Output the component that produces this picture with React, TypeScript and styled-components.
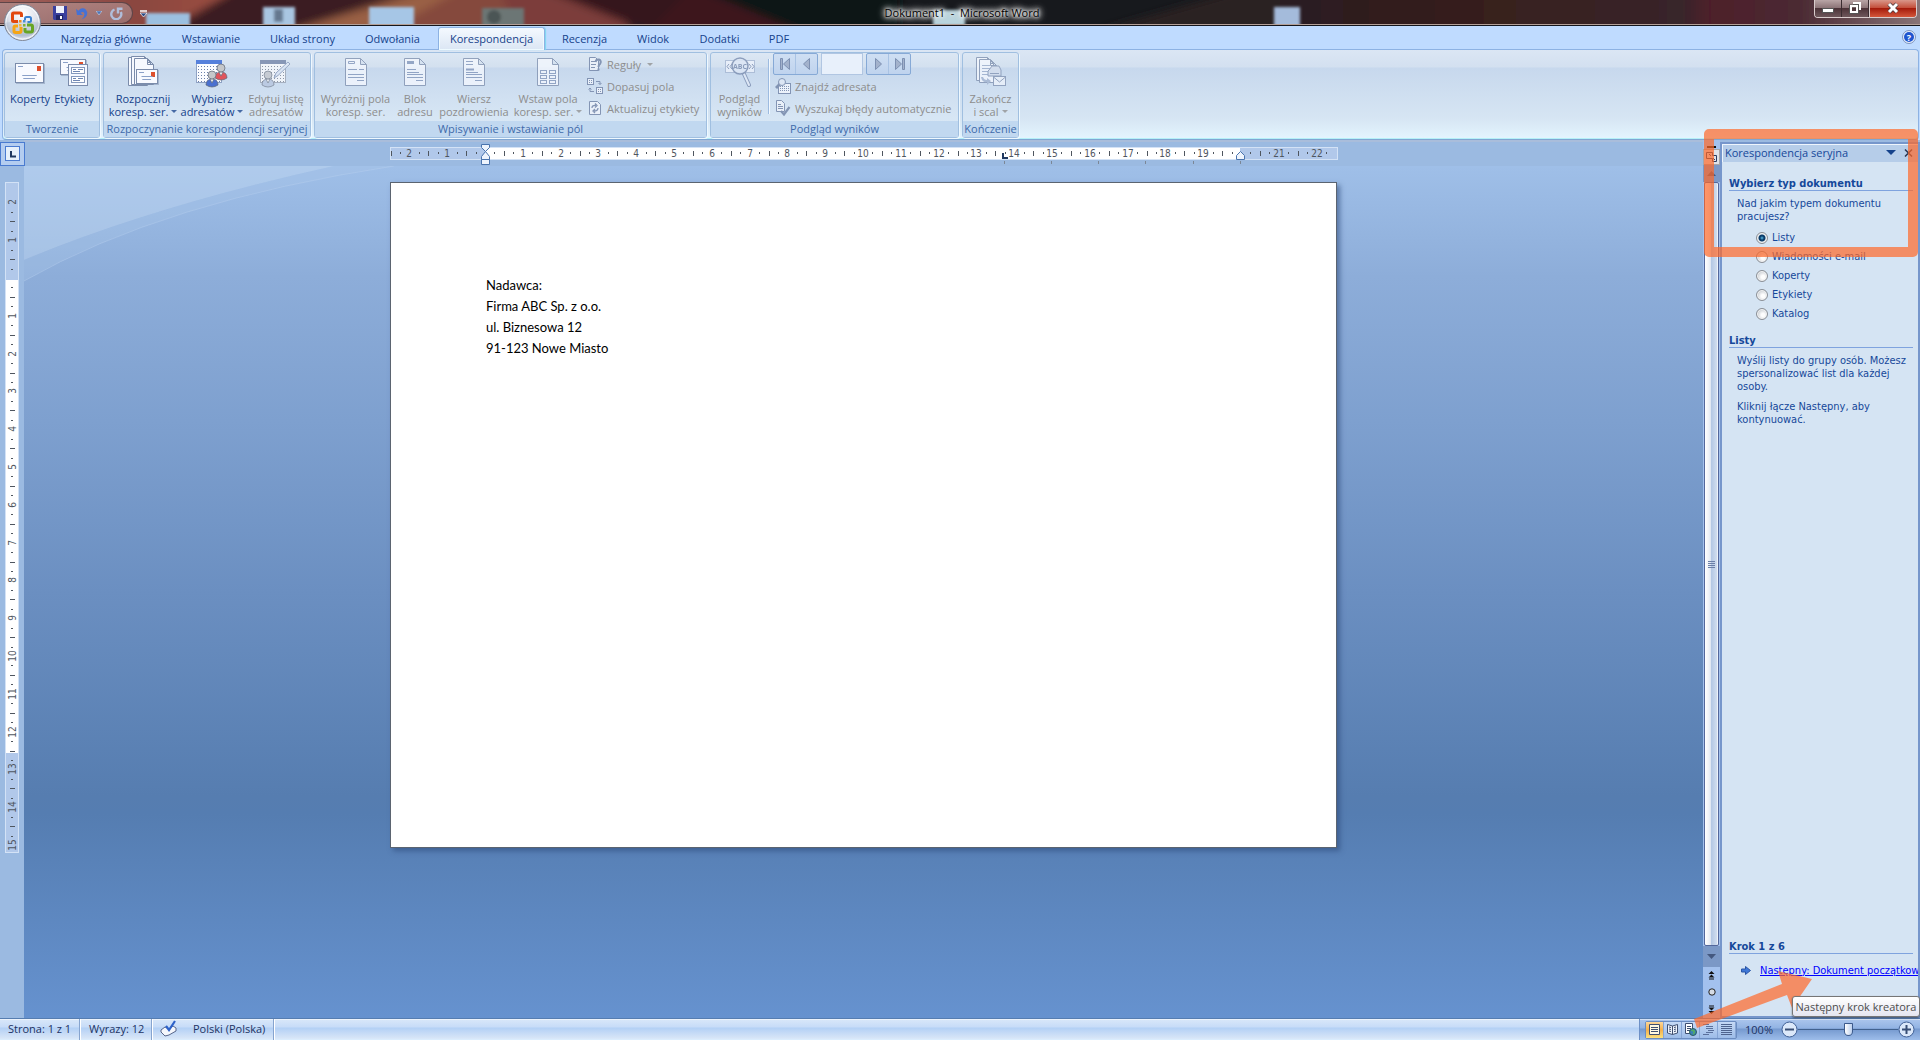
import React from "react";
import styled, { createGlobalStyle, css } from "styled-components";

const ui = `"Open Sans", "Noto Sans", sans-serif`;
const paneFont = `"DejaVu Sans Condensed", "DejaVu Sans", sans-serif`;
const navy = "#15428b";

const GlobalStyle = createGlobalStyle`
  * { box-sizing: border-box; }
  body { margin: 0; background: #5d86bd; }
  button, input { font: inherit; color: inherit; margin: 0; }
  h2, h3, p { margin: 0; }
  svg { flex-shrink: 0; }
`;

const Window = styled.div`
  position: relative;
  display: flex;
  flex-direction: column;
  min-height: 100vh;
  overflow: hidden;
  font: 11px/13px ${ui};
  color: ${navy};
`;

/* ---------- title bar ---------- */

const TitleBar = styled.header`
  position: relative;
  display: flex;
  align-items: flex-start;
  justify-content: space-between;
  height: 26px;
  border-bottom: 1px solid #15161c;
  box-shadow: inset 0 -1px #b39f97;
  background: #24191d;
`;

const Wallpaper = styled.svg`
  position: absolute;
  inset: 0;
  width: 100%;
  height: 24px;
`;

const QuickAccess = styled.div`
  position: relative;
  display: flex;
  align-items: center;
  width: 133px;
  height: 22px;
  margin-top: 2px;
  padding-left: 53px;
  gap: 8px;
  border: 1px solid #5f4548;
  border-left: 0;
  border-radius: 0 12px 12px 0;
  background: linear-gradient(#b99a9a99, #a5888a99);
`;

const ToolButton = styled.button`
  display: flex;
  padding: 0;
  border: 0;
  background: none;
`;

const Customize = styled(ToolButton)`
  position: absolute;
  left: 140px;
  top: 7px;
`;

const WindowTitle = styled.div`
  position: absolute;
  inset: 5px 0 auto 4px;
  text-align: center;
  line-height: 16px;
  color: #000;
  text-shadow: 0 0 3px #fff, 0 0 5px #fff, 0 0 6px #fff, 0 0 8px #eee, 0 0 10px #ccc;
`;

const WindowButtons = styled.div`
  position: relative;
  display: flex;
  height: 18px;
  margin-right: 3px;
  border: 1px solid #d9cccc;
  border-top: 0;
  border-radius: 0 0 4px 4px;
  overflow: hidden;
`;

const WindowButton = styled.button<{ $close?: boolean }>`
  display: flex;
  align-items: center;
  justify-content: center;
  width: ${(p) => (p.$close ? 47 : 27)}px;
  padding: 0 0 2px;
  border: 0;
  border-left: ${(p) => (p.$close ? 1 : 0)}px solid #d9cccc;
  border-right: ${(p) => (p.$close ? 0 : 1)}px solid #3a2c30;
  background: ${(p) =>
    p.$close
      ? "linear-gradient(#d9978a, #c4503c 45%, #a51c0c 50%, #d4563a)"
      : "linear-gradient(#b9a5a6, #8d7578 45%, #4c3338 50%, #6e575b)"};
`;

const OfficeButton = styled.button`
  position: absolute;
  z-index: 2;
  left: 3px;
  top: 3px;
  padding: 0;
  border: 0;
  background: none;
`;

/* ---------- ribbon ---------- */

const TabStrip = styled.nav`
  display: flex;
  align-items: flex-end;
  gap: 5px;
  height: 23px;
  padding-left: 48px;
  background: #bfdbff;
`;

const Tab = styled.button<{ $w: number; $active?: boolean }>`
  position: relative;
  z-index: 1;
  width: ${(p) => p.$w}px;
  height: 23px;
  margin-bottom: -1px;
  padding: 0 0 2px;
  border: 1px solid transparent;
  border-bottom: 0;
  border-radius: 3px 3px 0 0;
  background: none;
  white-space: nowrap;
  ${(p) =>
    p.$active &&
    css`
      border-color: #8db2e3;
      background: linear-gradient(#f4f9ff, #dbe6f4);
      box-shadow: inset 0 0 0 1px #eefaff, 1px 0 1px #7fd8f0;
    `}
`;

const HelpButton = styled.button`
  margin: 0 4px 5px auto;
  display: flex;
  padding: 0;
  border: 0;
  background: none;
`;

const RibbonFrame = styled.div`
  padding: 0 1px 0 2px;
  background: #bfdbff;
`;

const Ribbon = styled.div`
  display: flex;
  gap: 3px;
  height: 91px;
  padding: 2px 1px;
  border: 1px solid #8db2e3;
  border-bottom-color: #7fa6d3;
  border-radius: 4px;
  background: linear-gradient(#dbe6f4 0, #d3e0f0 17px, #c7d8ed 18px, #d6e5f3 68px, #e3f4fe 88px);
  box-shadow: inset 0 -1px #b4f0f8;
`;

const Group = styled.section`
  display: flex;
  flex-direction: column;
  height: 86px;
  border: 1px solid #a0bfe0;
  border-radius: 3px;
  background: linear-gradient(#dce7f4 0, #d3e0ef 14px, #c7d8ed 15px, #d8e7f5 69px);
  box-shadow: 1px 1px #eef8ff;
`;

const GroupBody = styled.div`
  display: flex;
  flex: 1;
  padding: 0 3px;
`;

const GroupLabel = styled.h2`
  display: flex;
  justify-content: center;
  height: 16px;
  font-weight: 400;
  font-size: 11px;
  line-height: 15px;
  white-space: nowrap;
  color: #3e6aaa;
  background: #c1d8f0;
`;

const BigButton = styled.button<{ $w: number }>`
  display: flex;
  flex-direction: column;
  align-items: center;
  gap: 4px;
  width: ${(p) => p.$w}px;
  padding: 3px 0 0;
  border: 0;
  background: none;
  white-space: nowrap;
  text-align: center;
  color: ${navy};
  &:disabled { color: #8d8d8d; }
`;

const SmallColumn = styled.div<{ $w: number }>`
  display: flex;
  flex-direction: column;
  width: ${(p) => p.$w}px;
`;

const SmallButton = styled.button`
  display: flex;
  align-items: center;
  gap: 4px;
  height: 22px;
  padding: 0 0 0 2px;
  border: 0;
  background: none;
  white-space: nowrap;
  &:disabled { color: #8d8d8d; }
`;

const Divider = styled.div`
  width: 2px;
  margin: 6px 3px 7px;
  border-left: 1px solid #9dbbe0;
  border-right: 1px solid #f2f8fe;
`;

const RecordNav = styled.div`
  display: flex;
  gap: 3px;
  height: 22px;
`;

const NavPair = styled.div`
  display: flex;
  width: 45px;
  border: 1px solid #86a9d6;
  border-radius: 2px;
  background: linear-gradient(#cfdff3, #bfd3ee);
`;

const NavButton = styled.button`
  display: flex;
  flex: 1;
  align-items: center;
  justify-content: center;
  padding: 0;
  border: 0;
  background: none;
  & + & { border-left: 1px solid #a9c3e4; }
`;

const RecordInput = styled.input`
  width: 42px;
  padding: 0 2px;
  border: 1px solid #b1c6e2;
  background: #e8f0fb;
`;

const Caret = styled.span`
  display: inline-block;
  margin-left: 3px;
  border: 3px solid transparent;
  border-top-color: currentColor;
  border-bottom: 0;
  vertical-align: 3px;
  opacity: 0.75;
`;

/* ---------- work area ---------- */

const Main = styled.main`
  display: grid;
  grid-template-columns: 24px 1fr 17px 200px;
  grid-template-rows: 26px 1fr;
  flex: 1;
  background: #9bbae1;
`;

const Corner = styled.button`
  width: 25px;
  height: 24px;
  margin-top: 2px;
  padding: 3px 4px;
  border: 1px solid #4a7bd0;
  background: #b4cdf0;
  z-index: 1;
  display: flex;
`;

const RulerRow = styled.div`
  display: flex;
  justify-content: center;
  border-top: 2px solid #a9bddb;
  background: #9bbae1;
`;

const VerticalBar = styled.div`
  display: flex;
  align-items: flex-start;
  justify-content: center;
  padding: 16px 1px 0 0;
`;

const Desk = styled.div`
  position: relative;
  display: flex;
  justify-content: center;
  align-items: flex-start;
  padding-top: 16px;
  background: linear-gradient(#9fbfe8 0, #8dadd9 13%, #7ea0cf 30%, #6b8fc1 50%, #567db0 74%, #557db1 76%, #6692cf 100%);
`;

const Swoosh = styled.svg`
  position: absolute;
  left: 0;
  top: 0;
`;

const Page = styled.article`
  position: relative;
  width: 947px;
  min-height: 666px;
  padding: 92px 95px;
  border: 1px solid #5b6470;
  background: #fff;
  box-shadow: 3px 3px 5px #2d4a7a99;
  font: 13px/21px Lato, sans-serif;
  color: #000;
`;

const ScrollColumn = styled.div`
  grid-row: 1 / 3;
  grid-column: 3;
  display: flex;
  flex-direction: column;
  align-items: stretch;
  padding-top: 4px;
  background: #a3c1ee;
`;

const ScrollButton = styled.button<{ $h: number; $dark?: boolean }>`
  display: flex;
  align-items: center;
  justify-content: center;
  height: ${(p) => p.$h}px;
  padding: 0;
  border: 0;
  background: ${(p) => (p.$dark ? "#7b98c6" : "none")};
`;

const RulerToggle = styled(ScrollButton)`
  border: 1px solid #a7a5a8;
  background: #dfe3ea;
`;

const ScrollThumb = styled.div`
  display: flex;
  flex: 1;
  flex-direction: column;
  align-items: center;
  justify-content: center;
  gap: 1px;
  margin: 0 1px;
  border: 1px solid #53679b;
  border-radius: 2px;
  background: linear-gradient(90deg, #fff 0, #eef1f7 30%, #dde5f1 45%, #b4c8e4 50%, #cfdcee 90%, #fff);
`;

const Grip = styled.span`
  width: 7px;
  height: 1px;
  background: #6b7fa8;
`;

const Pane = styled.aside`
  grid-row: 1 / 3;
  grid-column: 4;
  display: flex;
  flex-direction: column;
  min-width: 0;
  margin-top: 2px;
  padding-bottom: 2px;
  border: 2px solid #7696cb;
  background: #d5e4f3;
  font: 11px/13px ${paneFont};
  color: #15489a;
`;

const PaneHeader = styled.header`
  display: flex;
  align-items: center;
  gap: 8px;
  height: 18px;
  padding: 0 5px 0 3px;
  font: 11px/18px ${ui};
  background: #b6cde9;
  box-shadow: inset 1px 1px #eef5fd;
`;

const PaneTitle = styled.h2`
  flex: 1;
  font-size: 11px;
  font-weight: 400;
`;

const PaneSection = styled.section<{ $top: number }>`
  margin: ${(p) => p.$top}px 5px 0 7px;
`;

const PaneHeading = styled.h3`
  height: 14px;
  margin-bottom: 6px;
  border-bottom: 1px solid #7fa3de;
  font-size: 11px;
  line-height: 13px;
  font-weight: 700;
`;

const PaneText = styled.p`
  margin-left: 8px;
  white-space: nowrap;
  & + & { margin-top: 7px; }
`;

const ChoiceList = styled.div`
  padding-top: 5px;
`;

const Choice = styled.label`
  display: flex;
  align-items: center;
  gap: 4px;
  height: 19px;
  margin-left: 27px;
`;

const Radio = styled.input`
  appearance: none;
  width: 12px;
  height: 12px;
  border: 1px solid #8a8f96;
  border-radius: 50%;
  background: radial-gradient(circle at 60% 60%, #fdfdfd 20%, #c9cdd2 70%);
  box-shadow: inset 0 0 0 1px #f4f4f4;
  &:checked {
    background: radial-gradient(circle, #5cc3ee 0, #0b3d6b 2px, #0b3d6b 3px, #dfe3e8 4px);
  }
`;

const Spacer = styled.div`
  flex: 1;
`;

const StepRow = styled.div`
  display: flex;
  align-items: center;
  gap: 9px;
  height: 20px;
  margin: 0 -5px 34px 12px;
  overflow: hidden;
  white-space: nowrap;
`;

const StepLink = styled.a`
  color: #0000ff;
`;

/* ---------- status bar ---------- */

const StatusBar = styled.footer`
  display: flex;
  height: 22px;
  border-top: 1px solid #567db0;
  background: linear-gradient(#fff 0, #d7e6f9 1px, #c7dcf8 8px, #b3d0f5 9px, #d7e5f7 19px, #dcefff);
  color: #1c3263;
`;

const StatusItem = styled.div<{ $w: number; $pad: number }>`
  display: flex;
  align-items: center;
  width: ${(p) => p.$w}px;
  padding: 0 0 2px ${(p) => p.$pad}px;
  gap: 16px;
  border-right: 1px solid #86a4cf;
  box-shadow: 1px 0 #fff;
  white-space: nowrap;
`;

const ViewArea = styled.div`
  display: flex;
  align-items: center;
  margin-left: auto;
  width: 281px;
  padding-left: 5px;
  border-left: 1px solid #6d90c6;
  background: linear-gradient(#fff 0, #a9c4ec 1px, #92b3e3 9px, #7599cf 10px, #9dbdea);
`;

const ViewButtons = styled.div`
  display: flex;
  height: 18px;
  width: 92px;
  border: 1px solid #6b8cc0;
  border-radius: 2px;
`;

const ViewButton = styled.button<{ $active?: boolean }>`
  display: flex;
  flex: 1;
  align-items: center;
  justify-content: center;
  padding: 0;
  border: 0;
  border-right: 1px solid #86a5d5;
  background: ${(p) =>
    p.$active ? "linear-gradient(#fbd699, #f5b04a 50%, #fbe07e)" : "linear-gradient(#c5d9f5, #9dbce8)"};
`;

const ZoomLabel = styled.span`
  width: 44px;
  text-align: center;
`;

const ZoomButton = styled.button`
  display: flex;
  padding: 0;
  border: 0;
  background: none;
`;

const ZoomSlider = styled.input`
  appearance: none;
  width: 100px;
  height: 16px;
  background: linear-gradient(#41618f, #41618f) center / 100% 1px no-repeat;
  &::-webkit-slider-thumb {
    appearance: none;
    width: 9px;
    height: 13px;
    border: 1px solid #3c5a8c;
    border-radius: 1px 1px 5px 5px;
    background: linear-gradient(90deg, #fff, #bcd0ee);
  }
`;

/* ---------- overlays ---------- */

const Highlight = styled.div`
  position: absolute;
  z-index: 3;
  right: 2px;
  top: 129px;
  width: 214px;
  height: 128px;
  border: 10px solid rgba(255, 104, 40, 0.7);
  border-radius: 5px;
  pointer-events: none;
`;

const Pointer = styled.svg`
  position: absolute;
  z-index: 3;
  right: 106px;
  bottom: 10px;
  pointer-events: none;
`;

const Tooltip = styled.div`
  position: absolute;
  z-index: 4;
  right: 0;
  bottom: 23px;
  width: 128px;
  height: 21px;
  border: 1px solid #767676;
  border-radius: 3px;
  background: linear-gradient(#fff, #e4e5f0);
  box-shadow: 0 1px 2px #0007;
  line-height: 19px;
  text-align: center;
  white-space: nowrap;
  color: #4c4c4c;
`;

/* ---------- drawings ---------- */

const WallpaperArt = () => (
  <Wallpaper viewBox="0 0 1920 24" preserveAspectRatio="none" aria-hidden="true">
    <defs>
      <filter id="soft"><feGaussianBlur stdDeviation="4" /></filter>
      <filter id="edge"><feGaussianBlur stdDeviation="1.5" /></filter>
      <linearGradient id="left" x1="0" x2="1">
        <stop offset="0" stopColor="#a2635d" />
        <stop offset="0.6" stopColor="#8a4640" />
        <stop offset="1" stopColor="#9c4f42" />
      </linearGradient>
      <linearGradient id="right" x1="0" x2="1">
        <stop offset="0" stopColor="#2a1c20" />
        <stop offset="0.35" stopColor="#38201f" />
        <stop offset="0.62" stopColor="#38252a" />
        <stop offset="0.66" stopColor="#4e1f2a" />
        <stop offset="0.8" stopColor="#4b2a33" />
        <stop offset="1" stopColor="#8d7a7c" />
      </linearGradient>
    </defs>
    <rect width="1920" height="24" fill="#17191d" />
    <g filter="url(#soft)">
      <rect x="-10" y="-20" width="240" height="70" fill="url(#left)" />
      <path d="M235-10H430L290 40H150Z" fill="#3a1a20" />
      <path d="M425-10H600L640 40H260Z" fill="#85483d" />
      <path d="M425-10L460-10L370 40H260Z" fill="#9a6045" />
      <path d="M500-10H600L640 40H520Z" fill="#7c3c3a" />
      <path d="M545-10H760V40H670Z" fill="#35141a" />
      <path d="M690-10H705L830 40H640Z" fill="#3d171c" />
      <path d="M700-10H900V40H820Z" fill="#101418" />
      <path d="M1100 30L1240-10H1400V40Z" fill="#2c2022" />
      <rect x="1280" y="-20" width="650" height="70" fill="url(#right)" />
    </g>
    <g filter="url(#edge)">
      <rect x="146" y="13" width="44" height="14" fill="#9cc0e0" />
      <rect x="263" y="7" width="32" height="20" fill="#a9c6e2" />
      <rect x="274" y="9" width="9" height="13" fill="#65788f" />
      <rect x="369" y="7" width="45" height="20" fill="#a6c6e6" />
      <rect x="482" y="8" width="42" height="20" fill="#6c7674" />
      <circle cx="494" cy="17" r="7" fill="#4c5454" />
      <rect x="933" y="10" width="32" height="16" fill="#b9d4dd" />
      <rect x="1274" y="7" width="26" height="20" fill="#a4bbdb" />
    </g>
  </Wallpaper>
);

const OfficeLogo = () => (
  <svg width="39" height="39" viewBox="0 0 39 39" aria-hidden="true">
    <defs>
      <radialGradient id="orb" cx="0.5" cy="0.25" r="0.8">
        <stop offset="0" stopColor="#fff" />
        <stop offset="0.5" stopColor="#dfe3ec" />
        <stop offset="0.75" stopColor="#b7c1d3" />
        <stop offset="1" stopColor="#f5f8fd" />
      </radialGradient>
    </defs>
    <circle cx="19.5" cy="19.5" r="18" fill="url(#orb)" stroke="#7f8797" />
    <circle cx="19.5" cy="19.5" r="16.5" fill="none" stroke="#fff" opacity=".8" />
    <path d="M2 20Q19 15 37 20A18 18 0 0 1 2 20Z" fill="#aab6cb" opacity=".35" />
    <g fill="none" strokeWidth="3">
      <path d="M15 18.500H10.500Q9.500 18.500 9.500 17.500V11Q9.500 10 10.500 10H17Q18.500 10 18.500 11.500V14" stroke="#e2480f" />
      <path d="M22 17V15.500Q22 14 23.500 14H26.500Q28 14 28 15.500V17.500Q28 19 26.500 19H24.500" stroke="#3b82d2" strokeWidth="2" />
      <path d="M18 24V28Q18 29.500 16.500 29.500H12.500Q11 29.500 11 28V24.500Q11 23 12.500 23H15" stroke="#f6a514" />
      <path d="M24 22H28Q29.500 22 29.500 23.500V27.500Q29.500 29 28 29H24Q22 29 22 27.500V25" stroke="#67a524" />
    </g>
    <g fill="#f0901a">
      <rect x="16" y="17" width="2.500" height="2.500" /><rect x="20" y="17" width="2.500" height="2.500" fill="#4b8fd8" />
      <rect x="16" y="21" width="2.500" height="2.500" fill="#f6b73c" /><rect x="20" y="21" width="2.500" height="2.500" fill="#7db23a" />
    </g>
  </svg>
);

const SaveIcon = () => (
  <svg width="14" height="14" viewBox="0 0 14 14">
    <path d="M0 0H14V14H1L0 13Z" fill="#3a3f9e" />
    <rect x="3" y="0" width="8" height="7" fill="#eef1fb" />
    <rect x="3" y="9" width="7" height="5" fill="#1f2466" />
    <rect x="7" y="10" width="2" height="3" fill="#fff" />
  </svg>
);

const UndoIcon = () => (
  <svg width="13" height="13" viewBox="0 0 13 13">
    <path d="M1 2L2 8H8L5.500 5.800Q9 3.500 9.500 7Q9.500 10 6.500 12.500Q12.500 10.500 12.300 5.500Q11 .8 7 1.200Q5 1.500 3.500 3.800Z" fill="#4571d4" />
  </svg>
);

const RedoIcon = () => (
  <svg width="13" height="13" viewBox="0 0 13 13">
    <path d="M4.500 2.500A5 5 0 1 0 10.800 5M12.500 1.700H8V6.500" fill="none" stroke="#b0bedb" strokeWidth="2.400" />
  </svg>
);

const Envelope = ({ x, y, w, h }: { x: number; y: number; w: number; h: number }) => (
  <g>
    <rect x={x + 1} y={y + 1} width={w} height={h} fill="#7d8fae" opacity=".5" />
    <rect x={x + 0.5} y={y + 0.5} width={w - 1} height={h - 1} fill="#f8faff" stroke="#7b8cab" />
    <rect x={x + w - 7} y={y + 3} width="4" height="5" fill="#dd4f2c" />
    <path d={`M${x + 3} ${y + 3.500}h5M${x + w / 4} ${y + h - 7.500}h${w / 2}M${x + w / 3.500} ${y + h - 4.500}h${w / 2.500}`} stroke="#8aa0c8" />
  </g>
);

const Big = ({ children, faded }: { children: React.ReactNode; faded?: boolean }) => (
  <svg width="32" height="32" viewBox="0 0 32 32" opacity={faded ? 0.75 : 1} aria-hidden="true">{children}</svg>
);

const EnvelopesIcon = () => <Big><Envelope x={1} y={7} w={29} h={20} /></Big>;

const LabelsIcon = () => (
  <Big>
    <Envelope x={2} y={3} w={26} h={16} />
    <rect x="10.500" y="8.500" width="19" height="21" fill="#f5f8ff" stroke="#7b8cab" />
    <rect x="13.500" y="11.500" width="13" height="6" fill="#fff" stroke="#8599bd" />
    <rect x="13.500" y="20.500" width="13" height="6" fill="#fff" stroke="#8599bd" />
    <path d="M15 13.500h3m2 0h5M15 15.500h7M15 22.500h3m2 0h5M15 24.500h7" stroke="#6f86b3" />
  </Big>
);

const PageShape = ({ x, y, w, h }: { x: number; y: number; w: number; h: number }) => (
  <path
    d={`M${x + 0.5} ${y + 0.5}h${w - 7}l6 6v${h - 7}h${-(w - 1)}zM${x + w - 6.500} ${y + 0.5}v6h6`}
    fill="#f6f9ff"
    stroke="#7b8cab"
  />
);

const StartMergeIcon = () => (
  <Big>
    <PageShape x={1} y={1} w={20} h={29} />
    <PageShape x={4} y={0} w={20} h={29} />
    <PageShape x={7} y={2} w={20} h={27} />
    <Envelope x={9} y={13} w={22} h={15} />
  </Big>
);

const Person = ({ x, y, c }: { x: number; y: number; c: string }) => (
  <g stroke="#5d6576" strokeWidth=".7">
    <path d={`M${x - 6} ${y + 14}q0-6 6-6t6 6q-6 4-12 0z`} fill={c} />
    <path d={`M${x - 2} ${y + 8}l2 4l2-4z`} fill="#fff" />
    <circle cx={x} cy={y + 4} r="4" fill="#c5c7ca" />
  </g>
);

const Grid = () => (
  <g>
    <rect x=".5" y="4.500" width="25" height="22" fill="#fbfcff" stroke="#8fa2c4" />
    <rect x="0" y="4" width="26" height="4" fill="#5580dc" />
    {[10, 13, 16, 19, 22, 25].map((y) => (
      <path key={y} d={`M2 ${y}.5H25`} stroke="#6a7fa9" strokeDasharray="1 2" />
    ))}
  </g>
);

const RecipientsIcon = () => (
  <Big><Grid /><Person x={25} y={8} c="#e0545c" /><Person x={16} y={15} c="#4a70cf" /></Big>
);

const EditListIcon = () => (
  <Big faded>
    <g style={{ filter: "saturate(.4)" }}><Grid /></g>
    <Person x={8} y={15} c="#b6c4de" />
    <path d="M14 22L16 17L28 6L30 8L18 19.500Z" fill="#dfe8f6" stroke="#8597b8" />
  </Big>
);

type Lines = "highlight" | "address" | "greeting" | "field";

const FieldPageIcon = ({ kind }: { kind: Lines }) => (
  <Big faded>
    <PageShape x={5} y={2} w={22} h={28} />
    {kind === "field" ? (
      <g fill="none" stroke="#7f93b8">
        {[14, 19, 24].map((y) => (
          <g key={y}><rect x="8.500" y={y + 0.5} width="6" height="3" /><rect x="17.500" y={y + 0.5} width="6" height="3" /></g>
        ))}
      </g>
    ) : (
      <g stroke="#7f93b8">
        <path d="M8 18.500H24M8 21.500H24M17 24.500H24" />
        {kind === "highlight" && <path d="M8.500 5.500h6v2h-6zM8 13.500h9m2 0h5" fill="none" />}
        {kind === "address" && <path d="M8 6.500H15" strokeWidth="3" />}
        {kind === "address" && <path d="M8 13.500H17M8 16.500H20" />}
        {kind === "greeting" && <path d="M8 5.500H15M8 8.500H15M8 16.500H20" />}
        {kind === "greeting" && <path d="M8 13.500H16" strokeWidth="2" />}
      </g>
    )}
  </Big>
);

const PreviewIcon = () => (
  <Big faded>
    <rect x="1.500" y="4.500" width="29" height="12" fill="#eef3fc" stroke="#a3b4d0" />
    <path d="M5 8L3 10.500L5 13M8 8L6 10.500L8 13M25 8L27 10.500L25 13M28 8L30 10.500L28 13" fill="none" stroke="#7487ab" />
    <path d="M20 18L25 29" stroke="#7487ab" strokeWidth="4" strokeLinecap="round" />
    <path d="M20 18L25 29" stroke="#e3ebf8" strokeWidth="2" strokeLinecap="round" />
    <circle cx="16" cy="10" r="8" fill="#dde7f6" fillOpacity=".9" stroke="#7487ab" strokeWidth="1.500" />
    <text x="16" y="13" fontSize="7" fontFamily="Open Sans" fontWeight="700" textAnchor="middle" fill="#7487ab">ABC</text>
  </Big>
);

const FinishIcon = () => (
  <Big faded>
    <PageShape x={1} y={1} w={18} h={24} />
    <PageShape x={4} y={3} w={18} h={24} />
    <path d="M7 9.500h8M7 12.500h8M7 15.500h6M7 18.500h6" stroke="#9aabc9" />
    <path d="M14 14L17 10H24L26 14V20H13V15Z" fill="#d5deed" stroke="#7f90b0" />
    <path d="M15 17.500H24" stroke="#7f90b0" />
    <rect x="18.500" y="20.500" width="12" height="9" fill="#eef3fb" stroke="#7f90b0" />
    <path d="M18.500 21L24.500 26L30.500 21" fill="none" stroke="#7f90b0" />
    <path d="M6 21Q7 27 12 26V29L16 25L12 22V24Q9 24 8 21Z" fill="#9fb0cd" />
  </Big>
);

const Small = ({ children }: { children: React.ReactNode }) => (
  <svg width="16" height="16" viewBox="0 0 16 16" fill="none" stroke="#7688aa" opacity=".85" aria-hidden="true">{children}</svg>
);

const RulesIcon = () => (
  <Small>
    <path d="M2.500 1.500H8.500L11.500 4.500V14.500H2.500Z" fill="#eef3fb" />
    <path d="M4 5.500h4M4 8.500h5M4 11.500h4" />
    <path d="M8.500 6Q9 3 12 3.500Q15 5 13 8Q11.500 9 11.500 11M11.500 12.500V14.500" strokeWidth="2" />
  </Small>
);

const MatchIcon = () => (
  <Small>
    <rect x=".5" y=".5" width="6" height="6" fill="#eef3fb" />
    <rect x="9.500" y="9.500" width="6" height="6" fill="#eef3fb" />
    <path d="M2 2.500h1m1 0h1M2 4.500h1m1 0h1M11 11.500h1m1 0h1M11 13.500h1m1 0h1M9 3.500h4v3M11.500 5L13 6.500L14.500 5M7 13.500H3V10M1.500 11.500L3 10L4.500 11.500" />
  </Small>
);

const UpdateIcon = () => (
  <Small>
    <path d="M2.500 1.500H10.500L13.500 4.500V14.500H2.500Z" fill="#eef3fb" />
    <path d="M5 8Q5 5 9 5.500M8 3.500L10 5.500L8 7.500M11 8Q11 11 7 11M8 9L6 11L8 13" strokeWidth="1.300" />
  </Small>
);

const FindIcon = () => (
  <Small>
    <rect x="3.500" y="5.500" width="12" height="10" fill="#f2f6fd" />
    <path d="M5 8.500H15M5 10.500H15M5 12.500H15" strokeDasharray="1 1" />
    <path d="M5 6L1 10" strokeWidth="3" />
    <circle cx="7" cy="4" r="3.500" fill="#dfe8f6" />
  </Small>
);

const CheckErrorsIcon = () => (
  <Small>
    <path d="M1.500 .5H6.500L9.500 3.500V11.500H1.500Z" fill="#eef3fb" />
    <path d="M3 4.500h3M3 6.500h5M3 8.500h5" />
    <path d="M6 11L9 14.500L14.500 7" strokeWidth="2.200" />
  </Small>
);

const NavArrow = ({ d }: { d: string }) => (
  <svg width="12" height="12" viewBox="0 0 12 12" aria-hidden="true"><path d={d} fill="#a3b2cc" stroke="#7d90b2" /></svg>
);

const CM = 37.8;

const marks = (from: number, to: number, skip: number[] = []) => {
  const list: { at: number; label?: string; major?: boolean }[] = [];
  for (let q = Math.ceil(from * 4); q <= to * 4; q += 1) {
    if (q === 0 || skip.includes(q)) continue;
    list.push({ at: q / 4, label: q % 4 === 0 ? String(Math.abs(q / 4)) : undefined, major: q % 2 === 0 });
  }
  return list;
};

const Ruler = ({ length, zero, start, end, vertical, list }: {
  length: number; zero: number; start: number; end: number; vertical?: boolean;
  list: { at: number; label?: string; major?: boolean }[];
}) => {
  const w = vertical ? 14 : length;
  const h = vertical ? length : 13;
  return (
    <svg width={w} height={h} viewBox={`0 0 ${w} ${h}`} fontFamily={paneFont} fontSize="10" fill="#4f565f" overflow="visible">
      <rect x=".5" y=".5" width={w - 1} height={h - 1} fill="#b1c8ea" stroke="#d3e2f6" />
      {vertical
        ? <rect x="1" y={start} width="12" height={end - start} fill="#fff" />
        : <rect x={start} y="1" width={end - start} height="11" fill="#fff" />}
      {list.map(({ at, label, major }) => {
        const p = Math.round(zero + at * CM);
        if (label)
          return vertical
            ? <text key={at} textAnchor="middle" transform={`translate(11 ${p}) rotate(-90)`}>{label}</text>
            : <text key={at} x={p} y="10" textAnchor="middle">{label}</text>;
        const s = major ? 5 : 2;
        return vertical
          ? <rect key={at} x={major ? 5 : 6} y={p} width={s} height="1" />
          : <rect key={at} x={p} y={major ? 4 : 5} width="1" height={s} />;
      })}
    </svg>
  );
};

const HorizontalRuler = () => (
  <svg width="948" height="24" viewBox="0 0 948 24" overflow="visible" aria-label="Linijka pozioma">
    <g transform="translate(0 5)">
      <Ruler length={948} zero={95} start={95} end={850} list={marks(-2.5, 22.25, [80])} />
    </g>
    <g fill="#eef4fd" stroke="#4a74ae">
      <path d="M91.500 2.500H99.500V5.500L95.500 9.500L91.500 5.500Z" />
      <path d="M91.500 17.500V14.500L95.500 9.500L99.500 14.500V17.500ZM91.500 17.500H99.500V22.500H91.500Z" />
      <path d="M846.500 17.500V13.500L850.500 9.500L854.500 13.500V17.500Z" />
    </g>
    <path d="M613 11V16H618" fill="none" stroke="#1f3860" strokeWidth="2" />
    {[614, 661, 708, 755, 803, 850].map((x) => <rect key={x} x={x} y="19" width="1" height="3" fill="#7b8797" />)}
  </svg>
);

const DoubleArrow = ({ down }: { down?: boolean }) => (
  <svg width="9" height="9" viewBox="0 0 9 9" fill="#111">
    <path
      d="M4.500 0L7.500 3H1.500ZM4.500 3.500L7.500 6.500H1.500ZM2 7.500H7V8.500H2Z"
      transform={down ? "rotate(180 4.500 4.500)" : undefined}
    />
  </svg>
);

const ProofIcon = () => (
  <svg width="17" height="17" viewBox="0 0 17 17">
    <path d="M1 10L5 7L9 9L13 6L16 8V11L9 15L5 16L1 12Z" fill="#f5f7fc" stroke="#56658a" />
    <path d="M6 6L9 10L15 1" fill="none" stroke="#2e62c9" strokeWidth="2.200" />
  </svg>
);

const ViewIcon = ({ kind }: { kind: number }) => (
  <svg width="13" height="13" viewBox="0 0 13 13" fill="none" stroke="#3f4f70">
    {kind === 0 && <path d="M1.500 1.500H11.500V11.500H1.500ZM3 4.500H10M3 6.500H10M3 8.500H10" fill="#fff8e0" />}
    {kind === 1 && <path d="M6.500 3L1.500 1.500V10L6.500 11.500L11.500 10V1.500ZV11.500M3 4L5 4.500M3 6L5 6.500M3 8L5 8.500M8 4.500L10 4M8 6.500L10 6M8 8.500L10 8" fill="#f0f5fd" />}
    {kind === 2 && <><path d="M1.500 .5H8.500V10.500H1.500ZM3 3.500H7M3 5.500H7M3 7.500H6" fill="#fff" /><circle cx="9" cy="9" r="3.500" fill="#3a7fb9" stroke="#2d5f5a" /><path d="M7.500 8Q9 6.500 10 8T9 11" stroke="#53b05b" strokeWidth="1.500" /></>}
    {kind === 3 && <path d="M1 1.500H7M4 3.500H11M4 5.500H11M6 7.500H12M4 9.500H11M1 11.500H7" stroke="#5a709c" />}
    {kind === 4 && <path d="M1 1.500H12M1 3.500H12M1 5.500H12M1 7.500H12M1 9.500H12M1 11.500H12" stroke="#4f648e" />}
  </svg>
);

const ZoomIcon = ({ plus }: { plus?: boolean }) => (
  <svg width="17" height="17" viewBox="0 0 17 17">
    <circle cx="8.500" cy="8.500" r="7.500" fill="#dbe8fa" stroke="#3f5f95" />
    <path d={plus ? "M4 8.500H13M8.500 4V13" : "M4 8.500H13"} stroke="#384e75" strokeWidth="2" />
  </svg>
);

/* ---------- page ---------- */

const tabs: [string, number][] = [
  ["Narzędzia główne", 116],
  ["Wstawianie", 84],
  ["Układ strony", 89],
  ["Odwołania", 81],
  ["Korespondencja", 107],
  ["Recenzja", 69],
  ["Widok", 58],
  ["Dodatki", 65],
  ["PDF", 44],
];

const choices = ["Listy", "Wiadomości e-mail", "Koperty", "Etykiety", "Katalog"];

export default function App() {
  return (
    <Window>
      <GlobalStyle />
      <TitleBar>
        <WallpaperArt />
        <QuickAccess>
          <ToolButton aria-label="Zapisz"><SaveIcon /></ToolButton>
          <ToolButton aria-label="Cofnij"><UndoIcon /></ToolButton>
          <ToolButton aria-label="Lista cofnięć">
            <svg width="6" height="4"><path d="M0 0H6L3 4Z" fill="#4d74b5" stroke="#dbe5f5" strokeWidth=".5" /></svg>
          </ToolButton>
          <ToolButton aria-label="Wykonaj ponownie"><RedoIcon /></ToolButton>
          <Customize aria-label="Dostosuj">
            <svg width="7" height="7"><path d="M0 1H7" stroke="#fff" strokeWidth="1.500" /><path d="M0 3H7L3.500 7Z" fill="#2b4c86" stroke="#fff" strokeWidth=".7" /></svg>
          </Customize>
        </QuickAccess>
        <WindowTitle>Dokument1&nbsp; -&nbsp; Microsoft Word</WindowTitle>
        <WindowButtons>
          <WindowButton aria-label="Minimalizuj">
            <svg width="12" height="12"><rect x=".5" y="6.500" width="11" height="4" fill="#fff" stroke="#555" /></svg>
          </WindowButton>
          <WindowButton aria-label="Przywróć">
            <svg width="12" height="12" fill="none"><path d="M4 1H11V8M1.500 4H8.500V10.500H1.500Z" stroke="#555" strokeWidth="3" /><path d="M4 1H11V8M2 4H8V10H2Z" stroke="#fff" strokeWidth="2" /></svg>
          </WindowButton>
          <WindowButton $close aria-label="Zamknij">
            <svg width="12" height="12"><path d="M2 2L10 10M10 2L2 10" stroke="#4b3b3f" strokeWidth="4.500" /><path d="M2 2L10 10M10 2L2 10" stroke="#fff" strokeWidth="3" /></svg>
          </WindowButton>
        </WindowButtons>
      </TitleBar>
      <OfficeButton aria-label="Przycisk pakietu Office"><OfficeLogo /></OfficeButton>

      <TabStrip>
        {tabs.map(([name, w]) => (
          <Tab key={name} $w={w} $active={name === "Korespondencja"}>{name}</Tab>
        ))}
        <HelpButton aria-label="Pomoc">
          <svg width="14" height="14" viewBox="0 0 14 14">
            <circle cx="7" cy="7" r="6.500" fill="#e8f0fb" stroke="#7d93bd" />
            <circle cx="7" cy="7" r="5" fill="#1f55cf" />
            <text x="7" y="10.500" fontSize="9" fontWeight="700" fontFamily="Open Sans" textAnchor="middle" fill="#fff">?</text>
          </svg>
        </HelpButton>
      </TabStrip>

      <RibbonFrame>
        <Ribbon>
          <Group>
            <GroupBody>
              <BigButton $w={44}><EnvelopesIcon />Koperty</BigButton>
              <BigButton $w={44}><LabelsIcon />Etykiety</BigButton>
            </GroupBody>
            <GroupLabel>Tworzenie</GroupLabel>
          </Group>
          <Group>
            <GroupBody>
              <BigButton $w={72}><StartMergeIcon /><span>Rozpocznij<br />koresp. ser.<Caret /></span></BigButton>
              <BigButton $w={66}><RecipientsIcon /><span>Wybierz<br />adresatów<Caret /></span></BigButton>
              <BigButton $w={62} disabled><EditListIcon /><span>Edytuj listę<br />adresatów</span></BigButton>
            </GroupBody>
            <GroupLabel>Rozpoczynanie korespondencji seryjnej</GroupLabel>
          </Group>
          <Group>
            <GroupBody>
              <BigButton $w={75} disabled><FieldPageIcon kind="highlight" /><span>Wyróżnij pola<br />koresp. ser.</span></BigButton>
              <BigButton $w={44} disabled><FieldPageIcon kind="address" /><span>Blok<br />adresu</span></BigButton>
              <BigButton $w={74} disabled><FieldPageIcon kind="greeting" /><span>Wiersz<br />pozdrowienia</span></BigButton>
              <BigButton $w={74} disabled><FieldPageIcon kind="field" /><span>Wstaw pola<br />koresp. ser.<Caret /></span></BigButton>
              <SmallColumn $w={118}>
                <SmallButton disabled><RulesIcon /><span>Reguły <Caret /></span></SmallButton>
                <SmallButton disabled><MatchIcon />Dopasuj pola</SmallButton>
                <SmallButton disabled><UpdateIcon />Aktualizuj etykiety</SmallButton>
              </SmallColumn>
            </GroupBody>
            <GroupLabel>Wpisywanie i wstawianie pól</GroupLabel>
          </Group>
          <Group>
            <GroupBody>
              <BigButton $w={51} disabled><PreviewIcon /><span>Podgląd<br />wyników</span></BigButton>
              <Divider />
              <SmallColumn $w={182}>
                <RecordNav>
                  <NavPair>
                    <NavButton disabled aria-label="Pierwszy rekord"><NavArrow d="M1.500 .5H3.500V11.500H1.500ZM10.500 .5V11.500L4.500 6Z" /></NavButton>
                    <NavButton disabled aria-label="Poprzedni rekord"><NavArrow d="M8.500 .5V11.500L2.500 6Z" /></NavButton>
                  </NavPair>
                  <RecordInput aria-label="Rekord" />
                  <NavPair>
                    <NavButton disabled aria-label="Następny rekord"><NavArrow d="M3.500 .5V11.500L9.500 6Z" /></NavButton>
                    <NavButton disabled aria-label="Ostatni rekord"><NavArrow d="M8.500 .5H10.500V11.500H8.500ZM1.500 .5V11.500L7.500 6Z" /></NavButton>
                  </NavPair>
                </RecordNav>
                <SmallButton disabled><FindIcon />Znajdź adresata</SmallButton>
                <SmallButton disabled><CheckErrorsIcon />Wyszukaj błędy automatycznie</SmallButton>
              </SmallColumn>
            </GroupBody>
            <GroupLabel>Podgląd wyników</GroupLabel>
          </Group>
          <Group>
            <GroupBody>
              <BigButton $w={49} disabled><FinishIcon /><span>Zakończ<br />i scal<Caret /></span></BigButton>
            </GroupBody>
            <GroupLabel>Kończenie</GroupLabel>
          </Group>
        </Ribbon>
      </RibbonFrame>

      <Main>
        <Corner aria-label="Tabulator">
          <svg width="15" height="15"><rect x=".5" y=".5" width="14" height="14" fill="#e6f0fb" stroke="#4a7bd0" /><path d="M6 5V10.500H11" fill="none" stroke="#1f3860" strokeWidth="2" /></svg>
        </Corner>
        <RulerRow><HorizontalRuler /></RulerRow>
        <VerticalBar>
          <Ruler vertical length={671} zero={96} start={98} end={571} list={marks(-2.1, 15.1)} />
        </VerticalBar>
        <Desk>
          <Swoosh width="370" height="116" viewBox="0 0 370 116" aria-hidden="true">
            <path d="M0 0H310Q130 40 0 94Z" fill="#c4daf2" opacity=".45" />
            <path d="M310 0H370Q140 35 0 115V94Q130 40 310 0Z" fill="#aac6e8" opacity=".35" />
            <path d="M0 115Q140 35 370 0" fill="none" stroke="#bcd3f0" opacity=".4" />
          </Swoosh>
          <Page>
            <p>Nadawca:</p>
            <p>Firma ABC Sp. z o.o.</p>
            <p>ul. Biznesowa 12</p>
            <p>91-123 Nowe Miasto</p>
          </Page>
        </Desk>
        <ScrollColumn>
          <ScrollButton $h={5} aria-label="Podziel"><svg width="9" height="2"><rect width="9" height="2" fill="#111" /></svg></ScrollButton>
          <RulerToggle $h={16} aria-label="Linijka">
            <svg width="13" height="12" fill="none" stroke="#2b3c60"><path d="M1.500 1.500H7.500V4.500H11.500V10.500H7.500V7.500H1.500Z" /><path d="M4 3l2 2M8 7l2 2" /></svg>
          </RulerToggle>
          <ScrollButton $h={17} $dark aria-label="W górę"><svg width="9" height="5"><path d="M0 5L4.500 0L9 5Z" fill="#44587f" /></svg></ScrollButton>
          <ScrollThumb><Grip /><Grip /><Grip /><Grip /></ScrollThumb>
          <ScrollButton $h={21} $dark aria-label="W dół"><svg width="9" height="5"><path d="M0 0H9L4.500 5Z" fill="#44587f" /></svg></ScrollButton>
          <ScrollButton $h={16} aria-label="Poprzednia strona"><DoubleArrow /></ScrollButton>
          <ScrollButton $h={17} aria-label="Wybierz obiekt">
            <svg width="8" height="8"><circle cx="4" cy="4" r="3.200" fill="#d5dbe4" stroke="#222" /></svg>
          </ScrollButton>
          <ScrollButton $h={18} aria-label="Następna strona"><DoubleArrow down /></ScrollButton>
        </ScrollColumn>
        <Pane>
          <PaneHeader>
            <PaneTitle>Korespondencja seryjna</PaneTitle>
            <ToolButton aria-label="Opcje okienka"><svg width="10" height="6"><path d="M0 0H10L5 5Z" fill="#15428b" /></svg></ToolButton>
            <ToolButton aria-label="Zamknij okienko"><svg width="9" height="8"><path d="M1 .5L8 7.500M8 .5L1 7.500" stroke="#2a3553" strokeWidth="1.500" /></svg></ToolButton>
          </PaneHeader>
          <PaneSection $top={15}>
            <PaneHeading>Wybierz typ dokumentu</PaneHeading>
            <PaneText>Nad jakim typem dokumentu<br />pracujesz?</PaneText>
            <ChoiceList>
              {choices.map((name, i) => (
                <Choice key={name}><Radio type="radio" name="doctype" defaultChecked={i === 0} />{name}</Choice>
              ))}
            </ChoiceList>
          </PaneSection>
          <PaneSection $top={11}>
            <PaneHeading>Listy</PaneHeading>
            <PaneText>Wyślij listy do grupy osób. Możesz<br />spersonalizować list dla każdej<br />osoby.</PaneText>
            <PaneText>Kliknij łącze Następny, aby<br />kontynuować.</PaneText>
          </PaneSection>
          <Spacer />
          <PaneSection $top={0}>
            <PaneHeading>Krok 1 z 6</PaneHeading>
            <StepRow>
              <svg width="10" height="9"><path d="M.5 3H4.500V.5L9.500 4.500L4.500 8.500V6H.5Z" fill="#3f78d8" stroke="#2b55a5" /></svg>
              <StepLink href="#next">Następny: Dokument początkowy</StepLink>
            </StepRow>
          </PaneSection>
        </Pane>
      </Main>

      <StatusBar>
        <StatusItem $w={80} $pad={8}>Strona: 1 z 1</StatusItem>
        <StatusItem $w={72} $pad={9}>Wyrazy: 12</StatusItem>
        <StatusItem $w={122} $pad={8}><ProofIcon />Polski (Polska)</StatusItem>
        <ViewArea>
          <ViewButtons>
            {["Układ wydruku", "Czytanie", "Układ sieci Web", "Konspekt", "Wersja robocza"].map((name, i) => (
              <ViewButton key={name} $active={i === 0} aria-label={name}><ViewIcon kind={i} /></ViewButton>
            ))}
          </ViewButtons>
          <ZoomLabel>100%</ZoomLabel>
          <ZoomButton aria-label="Pomniejsz"><ZoomIcon /></ZoomButton>
          <ZoomSlider type="range" min={10} max={190} defaultValue={100} aria-label="Powiększenie" />
          <ZoomButton aria-label="Powiększ"><ZoomIcon plus /></ZoomButton>
        </ViewArea>
      </StatusBar>

      <Highlight />
      <Pointer width="122" height="62" viewBox="1692 968 122 62" aria-hidden="true">
        <path d="M1694 1019L1782 984L1778 971L1812 979L1792 1008L1787 995L1697 1028Z" fill="#ff6828" opacity=".7" />
      </Pointer>
      <Tooltip role="tooltip">Następny krok kreatora</Tooltip>
    </Window>
  );
}
